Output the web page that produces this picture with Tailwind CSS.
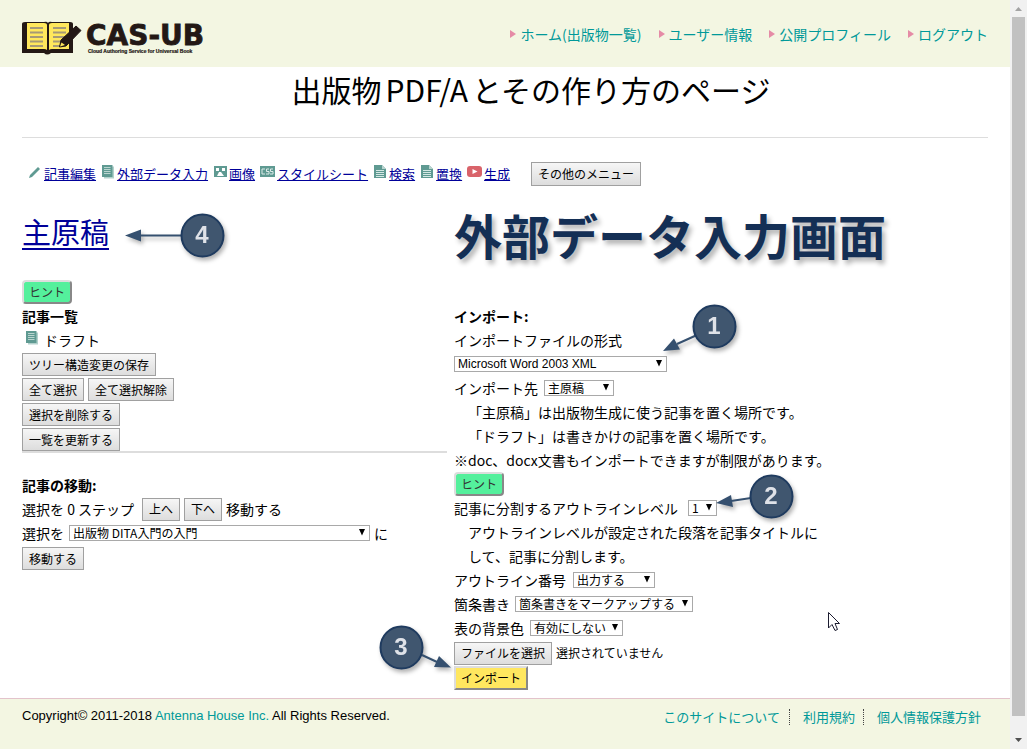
<!DOCTYPE html>
<html lang="ja">
<head>
<meta charset="utf-8">
<title>CAS-UB 外部データ入力</title>
<script src="https://cdn.jsdelivr.net/npm/@tailwindcss/browser@4"></script>
</head>
<body class="bg-white text-black text-[14px] leading-6 font-['Noto_Sans_CJK_JP',sans-serif]">
<svg class="hidden" aria-hidden="true">
  <defs>
    <symbol id="doc" viewBox="0 0 14 14"><path d="M1 0h8l4 4v9H1z" fill="#5f9a92"/><path d="M9 0v4h4z" fill="#b9d4cf"/><path d="M3 5.500h8M3 7.500h8M3 9.500h8M3 11.500h8" stroke="#d5e8e4" stroke-width="1"/></symbol>
    <symbol id="docs" viewBox="0 0 14 14"><path d="M3 1.500h10v12H3z" fill="#b3d1cc"/><path d="M1 0h10.500v12H1z" fill="#5f9a92"/><path d="M3 2.500h6.500M3 4.500h6.500M3 6.500h6.500M3 8.500h6.500" stroke="#b9d4cf" stroke-width="1"/></symbol>
    <symbol id="down" viewBox="0 0 8 7"><path d="M1 0h6L4 6.500z" fill="#000"/></symbol>
  </defs>
</svg>
<div class="relative flex min-h-screen">
  <div class="flex min-w-0 flex-1 flex-col">
    <header class="flex h-[67px] items-center justify-between bg-[#f3f6e2] px-[22px]">
      <a href="#" aria-label="CAS-UB" class="mt-2">
        <svg width="190" height="34" viewBox="0 0 190 34">
          <path d="M0 3Q0 1 3 1H22Q25 0 26 2Q27 0 30 1H48Q51 1 51 3V32H29Q25 35 22 32H0z" fill="#231815"/>
          <path d="M5 2H22Q25 2 25 4V29Q24 28 22 28H5zM27 4Q27 2 30 2H47V28H30Q28 28 27 29z" fill="#ffe85c"/>
          <path d="M8 7h13M8 11.500h13M8 16h13M8 20.500h13M8 25h13M31 7h13M31 11.500h13M31 16h13M31 20.500h10M31 25h7" stroke="#a69a76" stroke-width="2"/>
          <path d="M39 19L54 5L59 9.500L44 25L37.500 26z" fill="#231815" stroke="#231815" stroke-width="1" stroke-linejoin="round"/>
          <path d="M39.500 21.500L43 24L38 25.500z" fill="#ffe85c"/>
          <text x="64" y="24" font-family="DejaVu Sans" font-weight="700" font-size="28" fill="#231815" stroke="#231815" stroke-width="0.8">CAS-UB</text>
          <text x="66" y="32" font-family="Liberation Sans" font-weight="700" font-size="5" fill="#231815" stroke="#231815" stroke-width="0.2">Cloud Authoring Service for Universal Book</text>
        </svg>
      </a>
      <nav class="flex gap-[17px] text-[#009999]">
        <a href="#" class="flex items-center gap-1"><svg width="6" height="8" viewBox="0 0 6 8"><path d="M0 0l6 4-6 4z" fill="#e58ba6"/></svg>ホーム(出版物一覧)</a>
        <a href="#" class="flex items-center gap-1"><svg width="6" height="8" viewBox="0 0 6 8"><path d="M0 0l6 4-6 4z" fill="#e58ba6"/></svg>ユーザー情報</a>
        <a href="#" class="flex items-center gap-1"><svg width="6" height="8" viewBox="0 0 6 8"><path d="M0 0l6 4-6 4z" fill="#e58ba6"/></svg>公開プロフィール</a>
        <a href="#" class="flex items-center gap-1"><svg width="6" height="8" viewBox="0 0 6 8"><path d="M0 0l6 4-6 4z" fill="#e58ba6"/></svg>ログアウト</a>
      </nav>
    </header>

    <main class="flex-1 px-[22px]">
      <h1 class="border-b border-[#ddd] pb-[26px] pl-[52px] text-center text-[30px] leading-[44px]">出版物<span class="mx-1">PDF/A</span>とその作り方のページ</h1>

      <div class="flex h-[70px] items-center gap-[5px] pl-[6px] pt-[2px] text-[13px] text-[#000099]">
        <a href="#" class="flex items-center gap-[2px]"><svg class="mb-1" width="14" height="14" viewBox="0 0 14 14"><path d="M1 13l1-3 8-8 2 2-8 8z" fill="#5f9a92"/></svg><span class="underline">記事編集</span></a>
        <a href="#" class="flex items-center gap-[2px]"><svg class="mb-1" width="14" height="14"><use href="#docs"/></svg><span class="underline">外部データ入力</span></a>
        <a href="#" class="flex items-center gap-[2px]"><svg class="mb-1" width="14" height="14" viewBox="0 0 14 14"><path d="M1 1h13v11H1z" fill="#5f9a92"/><path d="M3 3h3v3H3zM9 3h3v3H9zM6 7h2l3 4H4z" fill="#fff"/></svg><span class="underline">画像</span></a>
        <a href="#" class="flex items-center gap-[2px]"><svg class="mb-1" width="15" height="14" viewBox="0 0 15 14"><path d="M0 1h15v11H0z" fill="#5f9a92"/><path d="M5 4H2v5h3M9 4H6.500v2.500H9V9H6M13 4h-2.500v2.500H13V9h-3" fill="none" stroke="#dcebe8" stroke-width="1"/></svg><span class="underline">スタイルシート</span></a>
        <a href="#" class="flex items-center gap-[2px]"><svg class="mb-1" width="14" height="14"><use href="#doc"/></svg><span class="underline">検索</span></a>
        <a href="#" class="flex items-center gap-[2px]"><svg class="mb-1" width="14" height="14"><use href="#doc"/></svg><span class="underline">置換</span></a>
        <a href="#" class="flex items-center gap-[2px]"><svg class="mb-1" width="15" height="14" viewBox="0 0 15 14"><rect y="1" width="15" height="11" rx="3" fill="#d9636a"/><path d="M5.500 4l5 2.500-5 2.500z" fill="#fff"/></svg><span class="underline">生成</span></a>
        <button class="ml-4 h-6 border border-[#a0a0a0] bg-linear-to-b from-[#f6f6f6] to-[#dddddd] px-[6px] text-[12px] leading-5 text-black">その他のメニュー</button>
      </div>

      <div class="grid grid-cols-[44%_1fr] gap-[7px]">
        <section>
          <h2 class="text-[29px] leading-[46px] text-[#000099]"><a href="#" class="underline decoration-2 underline-offset-4">主原稿</a></h2>
          <button class="mt-[26px] block h-6 rounded-[4px] border-2 border-t-[#ddd] border-l-[#ddd] border-r-[#888] border-b-[#888] bg-[#54f09c] px-[5px] text-[12px] leading-5 text-[#333]">ヒント</button>
          <h3 class="font-bold">記事一覧</h3>
          <div class="flex items-center gap-[5px] pl-[3px]"><svg class="mb-1" width="14" height="14"><use href="#docs"/></svg>ドラフト</div>
          <div class="mt-px flex flex-col items-start gap-[2px] text-[12px] leading-5">
            <button class="h-[23px] border border-[#a0a0a0] bg-linear-to-b from-[#f6f6f6] to-[#dddddd] px-[6px]">ツリー構造変更の保存</button>
            <div class="flex gap-1">
              <button class="h-[23px] border border-[#a0a0a0] bg-linear-to-b from-[#f6f6f6] to-[#dddddd] px-[6px]">全て選択</button>
              <button class="h-[23px] border border-[#a0a0a0] bg-linear-to-b from-[#f6f6f6] to-[#dddddd] px-[6px]">全て選択解除</button>
            </div>
            <button class="h-[23px] border border-[#a0a0a0] bg-linear-to-b from-[#f6f6f6] to-[#dddddd] px-[6px]">選択を削除する</button>
            <button class="h-[23px] border border-[#a0a0a0] bg-linear-to-b from-[#f6f6f6] to-[#dddddd] px-[6px]">一覧を更新する</button>
          </div>
          <hr class="border-0 border-t-2 border-[#ddd]">
          <h3 class="mt-5 font-bold">記事の移動:</h3>
          <div class="flex h-6 items-center gap-1">
            <span class="w-[116px]">選択を 0 ステップ</span>
            <button class="h-[23px] border border-[#a0a0a0] bg-linear-to-b from-[#f6f6f6] to-[#dddddd] px-[6px] text-[12px] leading-5">上へ</button>
            <button class="h-[23px] border border-[#a0a0a0] bg-linear-to-b from-[#f6f6f6] to-[#dddddd] px-[6px] text-[12px] leading-5">下へ</button>
            <span>移動する</span>
          </div>
          <div class="flex h-6 items-center gap-1">
            <label for="dest" class="w-[43px]">選択を</label>
            <div class="relative flex w-[301px]">
              <select id="dest" class="h-4 w-full appearance-none border border-[#a9a9a9] bg-white pl-[3px] text-[12px] leading-[14px]"><option>出版物 DITA入門の入門</option></select>
              <svg class="pointer-events-none absolute right-1 top-1" width="8" height="7"><use href="#down"/></svg>
            </div>
            <span>に</span>
          </div>
          <button class="mt-[2px] block h-[23px] border border-[#a0a0a0] bg-linear-to-b from-[#f6f6f6] to-[#dddddd] px-[6px] text-[12px] leading-5">移動する</button>
        </section>

        <section>
          <h2 class="text-[48px] leading-[52px] font-bold text-[#142f55] text-shadow-[3px_4px_5px_rgb(0_0_0/0.3)]">外部データ入力画面</h2>
          <h3 class="mt-11 font-bold">インポート:</h3>
          <label for="format" class="block">インポートファイルの形式</label>
          <div class="flex h-6 items-center">
            <div class="relative flex w-[213px]">
              <select id="format" class="h-4 w-full appearance-none border border-[#a9a9a9] bg-white pl-[3px] font-['Liberation_Sans',sans-serif] text-[12px] leading-[14px]"><option>Microsoft Word 2003 XML</option></select>
              <svg class="pointer-events-none absolute right-1 top-1" width="8" height="7"><use href="#down"/></svg>
            </div>
          </div>
          <div class="flex h-6 items-center gap-1">
            <label for="target" class="w-[86px]">インポート先</label>
            <div class="relative flex w-[70px]">
              <select id="target" class="h-4 w-full appearance-none border border-[#a9a9a9] bg-white pl-[3px] text-[12px] leading-[14px]"><option>主原稿</option></select>
              <svg class="pointer-events-none absolute right-1 top-1" width="8" height="7"><use href="#down"/></svg>
            </div>
          </div>
          <p class="pl-[14px]">「主原稿」は出版物生成に使う記事を置く場所です。</p>
          <p class="pl-[14px]">「ドラフト」は書きかけの記事を置く場所です。</p>
          <p>※doc、docx文書もインポートできますが制限があります。</p>
          <button class="block h-6 rounded-[4px] border-2 border-t-[#ddd] border-l-[#ddd] border-r-[#888] border-b-[#888] bg-[#54f09c] px-[5px] text-[12px] leading-5 text-[#333]">ヒント</button>
          <div class="flex h-6 items-center gap-1">
            <label for="level" class="w-[230px]">記事に分割するアウトラインレベル</label>
            <div class="relative flex w-[29px]">
              <select id="level" class="h-4 w-full appearance-none border border-[#a9a9a9] bg-white pl-[3px] text-[12px] leading-[14px]"><option>1</option></select>
              <svg class="pointer-events-none absolute right-1 top-1" width="8" height="7"><use href="#down"/></svg>
            </div>
          </div>
          <p class="pl-[14px]">アウトラインレベルが設定された段落を記事タイトルに<br>して、記事に分割します。</p>
          <div class="flex h-6 items-center gap-1">
            <label for="number" class="w-[115px]">アウトライン番号</label>
            <div class="relative flex w-[82px]">
              <select id="number" class="h-4 w-full appearance-none border border-[#a9a9a9] bg-white pl-[3px] text-[12px] leading-[14px]"><option>出力する</option></select>
              <svg class="pointer-events-none absolute right-1 top-1" width="8" height="7"><use href="#down"/></svg>
            </div>
          </div>
          <div class="flex h-6 items-center gap-1">
            <label for="list" class="w-[57px]">箇条書き</label>
            <div class="relative flex w-[178px]">
              <select id="list" class="h-4 w-full appearance-none border border-[#a9a9a9] bg-white pl-[3px] text-[12px] leading-[14px]"><option>箇条書きをマークアップする</option></select>
              <svg class="pointer-events-none absolute right-1 top-1" width="8" height="7"><use href="#down"/></svg>
            </div>
          </div>
          <div class="flex h-6 items-center gap-1">
            <label for="bgcolor" class="w-[72px]">表の背景色</label>
            <div class="relative flex w-[93px]">
              <select id="bgcolor" class="h-4 w-full appearance-none border border-[#a9a9a9] bg-white pl-[3px] text-[12px] leading-[14px]"><option>有効にしない</option></select>
              <svg class="pointer-events-none absolute right-1 top-1" width="8" height="7"><use href="#down"/></svg>
            </div>
          </div>
          <div class="relative mt-px flex h-6 items-center gap-1 text-[12px] leading-5">
            <input id="file" type="file" class="sr-only">
            <label for="file" class="h-[23px] border border-[#a0a0a0] bg-linear-to-b from-[#f6f6f6] to-[#dddddd] px-[6px]">ファイルを選択</label>
            <span>選択されていません</span>
          </div>
          <button class="mt-px block h-6 border-2 border-t-[#ddd] border-l-[#ddd] border-r-[#888] border-b-[#888] bg-[#ffe75f] px-[5px] text-[12px] leading-5">インポート</button>
        </section>
      </div>
    </main>

    <footer class="flex h-[51px] items-start justify-between border-t border-[#e3c3cb] bg-[#f3f6e2] px-[22px] pt-[7px] text-[13px]">
      <p class="leading-5 font-['Liberation_Sans',sans-serif]">Copyright© 2011-2018 <a href="#" class="text-[#009999]">Antenna House Inc.</a> All Rights Reserved.</p>
      <nav class="mt-[3px] flex pr-[7px] leading-4 text-[#009999]">
        <a href="#" class="pr-[9px]">このサイトについて</a>
        <a href="#" class="border-l border-dotted border-[#444] pl-[13px] pr-2">利用規約</a>
        <a href="#" class="border-l border-dotted border-[#444] pl-[13px]">個人情報保護方針</a>
      </nav>
    </footer>
  </div>

  <!-- page scrollbar -->
  <div class="flex w-[17px] flex-col items-center bg-[#f1f1f1]" aria-hidden="true">
    <svg width="17" height="17" viewBox="0 0 17 17"><path d="M5 11l3.500-4 3.500 4z" fill="#a3a3a3"/></svg>
    <div class="w-[13px] flex-1 bg-[#c1c1c1]"></div>
    <svg width="17" height="33" viewBox="0 0 17 33"><path d="M5 22l3.500 4 3.500-4z" fill="#505050"/></svg>
  </div>

  <!-- numbered callouts and pointer drawn over the form -->
  <svg class="pointer-events-none absolute left-0 top-0 drop-shadow-[2px_3px_2px_rgb(0_0_0/0.3)]" width="1010" height="749" viewBox="0 0 1010 749">
    <g stroke="#35506f" stroke-width="2">
      <path d="M138 235.500H182M677 344L697 335M731 501L751 498M422 655L437 662"/>
    </g>
    <g fill="#35506f">
      <path d="M125 235.500L141 229.500V241.500zM663 351L674 338.500L680 349.500zM716 503L731 495L733 507zM451 667.500L439 656L434 667z"/>
    </g>
    <g fill="#40566f" stroke="#1f3b5f" stroke-width="2">
      <circle cx="202.500" cy="235.500" r="21"/><circle cx="714.500" cy="326.500" r="21"/><circle cx="771.500" cy="496.500" r="21"/><circle cx="401.500" cy="647.500" r="21"/>
    </g>
    <g fill="#dfe2e8" font-family="Liberation Sans" font-weight="700" font-size="24" text-anchor="middle">
      <text x="202" y="243">4</text><text x="714" y="334">1</text><text x="771" y="504">2</text><text x="401" y="655">3</text>
    </g>
  </svg>
  <svg class="pointer-events-none absolute left-[828px] top-[612px]" width="13" height="20" viewBox="0 0 13 20"><path d="M.5.500V16L4 12.500L7 18.500L9.500 17.500L7 11.500H11.500z" fill="#fff" stroke="#1c1c30" stroke-width="1"/></svg>
</div>
</body>
</html>
